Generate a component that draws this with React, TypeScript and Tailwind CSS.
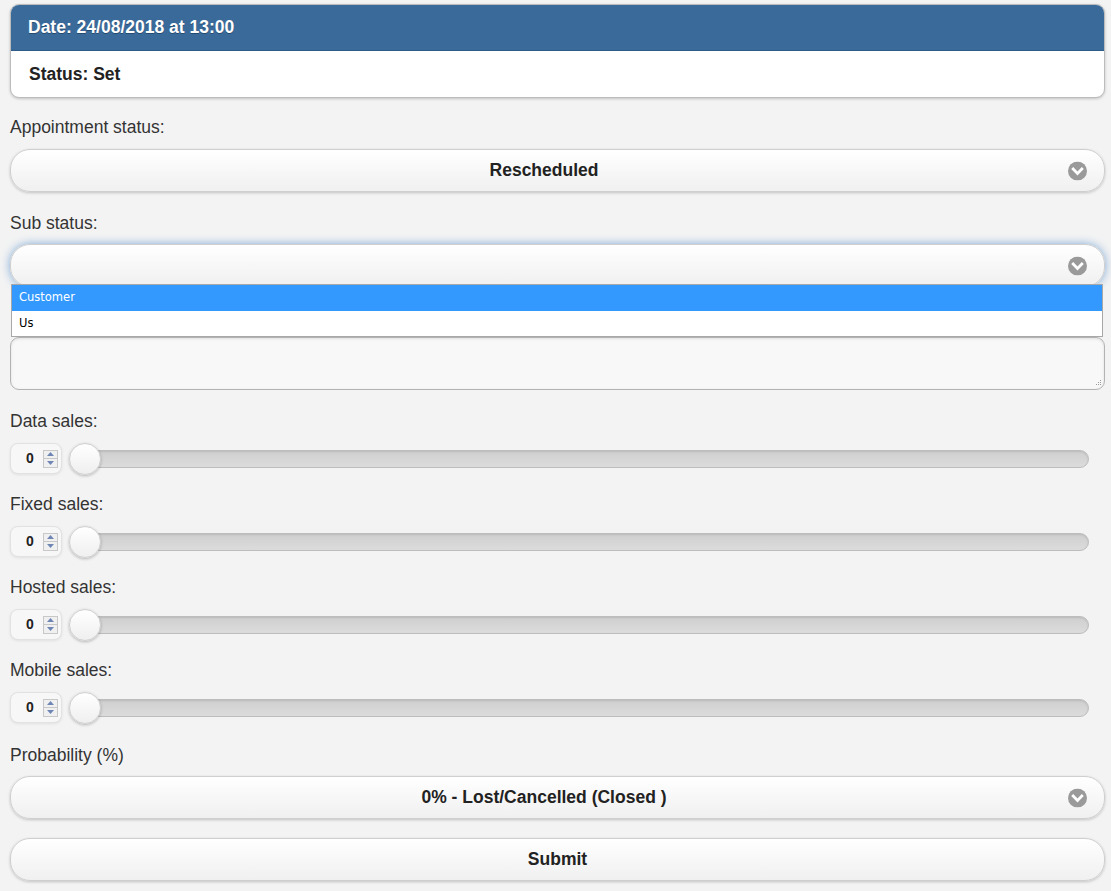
import React from 'react';

const font = { fontFamily: '"Liberation Sans", Arial, sans-serif' };

function Chevron() {
  return (
    <svg width="19" height="19" viewBox="0 0 19 19" className="shrink-0">
      <circle cx="9.5" cy="9.5" r="9.5" fill="#9a9a9a" />
      <path
        d="M5.2 7.6 L9.5 11.9 L13.8 7.6"
        fill="none"
        stroke="#fff"
        strokeWidth="2.8"
        strokeLinecap="square"
      />
    </svg>
  );
}

function SelectBtn({ label, focused }: { label: string; focused?: boolean }) {
  return (
    <div
      className={`relative flex h-[43px] items-center justify-center rounded-[20px] border border-[#cfcfcf] bg-gradient-to-b from-white to-[#f0f0f0] pr-[27px] ${
        focused
          ? 'shadow-[0_0_10px_#7ea9d6]'
          : 'shadow-[0_1px_3px_rgba(0,0,0,0.2)]'
      }`}
    >
      <span className="text-[17.5px] font-bold text-[#222]">{label}</span>
      <div className="absolute right-[17px] top-1/2 -translate-y-1/2">
        <Chevron />
      </div>
    </div>
  );
}

function Spinner() {
  return (
    <div className="flex h-[18px] w-[15px] flex-col border border-[#c8c8c8] bg-[#f0f0f0]">
      <div className="flex flex-1 items-center justify-center border-b border-[#c8c8c8]">
        <svg width="7" height="4" viewBox="0 0 7 4">
          <path d="M0 4 L3.5 0 L7 4 Z" fill="#6f86b5" />
        </svg>
      </div>
      <div className="flex flex-1 items-center justify-center">
        <svg width="7" height="4" viewBox="0 0 7 4">
          <path d="M0 0 L3.5 4 L7 0 Z" fill="#6f86b5" />
        </svg>
      </div>
    </div>
  );
}

function Label({ children, className = '' }: { children?: React.ReactNode; className?: string }) {
  return (
    <div className={`h-[22px] text-[17.5px] leading-[22px] text-[#333] ${className}`}>
      {children}
    </div>
  );
}

function SliderRow({ label }: { label: string }) {
  return (
    <div>
      <Label>{label}</Label>
      <div className="mt-[11px] flex h-[31px] items-center">
        <div className="flex h-[31px] w-[52px] items-center rounded-[8px] border border-[#e2e2e2] bg-[#f7f7f7] pl-[15px] shadow-[0_1px_3px_rgba(0,0,0,0.08)]">
          <span className="w-[17px] text-[14px] font-bold text-[#222]">0</span>
          <Spinner />
        </div>
        <div className="relative ml-[8px] flex h-[32px] flex-1 items-center">
          <div className="h-[18px] w-full rounded-full border border-[#bdbdbd] bg-gradient-to-b from-[#cfcfcf] to-[#dcdcdc] shadow-[inset_0_1px_2px_rgba(0,0,0,0.1)]" />
          <div className="absolute left-[-1px] top-0 h-[32px] w-[32px] rounded-full border border-[#cfcfcf] bg-gradient-to-b from-white to-[#efefef] shadow-[0_1px_3px_rgba(0,0,0,0.25)]" />
        </div>
        <div className="w-[16px]" />
      </div>
    </div>
  );
}

export default function App() {
  return (
    <div className="min-h-[891px] bg-[#f3f3f3] pl-[10px] pr-[6px] pt-[4px]" style={font}>
      {/* header card */}
      <div className="overflow-hidden rounded-[9px] border border-[#bcbcbc] bg-white shadow-[0_1px_3px_rgba(0,0,0,0.2)]">
        <div className="flex h-[46px] items-center border-b border-[#2d5a86] bg-[#3a6a9a] px-[17px]">
          <span className="text-[17.5px] font-bold text-white [text-shadow:0_1px_0_#254a70]">
            Date: 24/08/2018 at 13:00
          </span>
        </div>
        <div className="flex h-[46px] items-center px-[18px]">
          <span className="text-[17.5px] font-bold text-[#222]">Status: Set</span>
        </div>
      </div>

      <Label className="mt-[18px]">Appointment status:</Label>
      <div className="mt-[11px]">
        <SelectBtn label="Rescheduled" />
      </div>

      <Label className="mt-[20px]">Sub status:</Label>
      <div className="relative mt-[10px]">
        <SelectBtn label="" focused />
        {/* open native option list */}
        <div
          className="absolute left-[1px] right-[2px] top-[40px] z-10 border border-[#a8a8a8] bg-white"
          style={{ fontFamily: '"DejaVu Sans", Tahoma, sans-serif' }}
        >
          <div className="flex h-[26px] items-center bg-[#3399ff] px-[7px] text-[11.5px] text-white">
            Customer
          </div>
          <div className="flex h-[25px] items-center px-[7px] text-[11.5px] text-black">Us</div>
        </div>
      </div>

      {/* label hidden behind the option list */}
      <Label className="mt-[19px]" />
      <div className="relative mt-[9px] h-[53px] rounded-[9px] border border-[#b3b3b3] bg-[#f8f8f8] shadow-[inset_0_1px_3px_rgba(0,0,0,0.1)]">
        <svg width="8" height="8" viewBox="0 0 8 8" className="absolute bottom-[2px] right-[2px]">
          <g fill="#9a9a9a">
            <rect x="6" y="1" width="1" height="1" />
            <rect x="4" y="3" width="1" height="1" />
            <rect x="6" y="3" width="1" height="1" />
            <rect x="2" y="5" width="1" height="1" />
            <rect x="4" y="5" width="1" height="1" />
            <rect x="6" y="5" width="1" height="1" />
          </g>
        </svg>
      </div>

      <div className="mt-[20px] flex flex-col gap-[19px]">
        <SliderRow label="Data sales:" />
        <SliderRow label="Fixed sales:" />
        <SliderRow label="Hosted sales:" />
        <SliderRow label="Mobile sales:" />
      </div>

      <Label className="mt-[21px]">Probability (%)</Label>
      <div className="mt-[10px]">
        <SelectBtn label="0% - Lost/Cancelled (Closed )" />
      </div>
      <div className="mt-[19px]">
        <div className="flex h-[43px] items-center justify-center rounded-[20px] border border-[#cfcfcf] bg-gradient-to-b from-white to-[#f0f0f0] shadow-[0_1px_3px_rgba(0,0,0,0.2)]">
          <span className="text-[17.5px] font-bold text-[#222]">Submit</span>
        </div>
      </div>
    </div>
  );
}
